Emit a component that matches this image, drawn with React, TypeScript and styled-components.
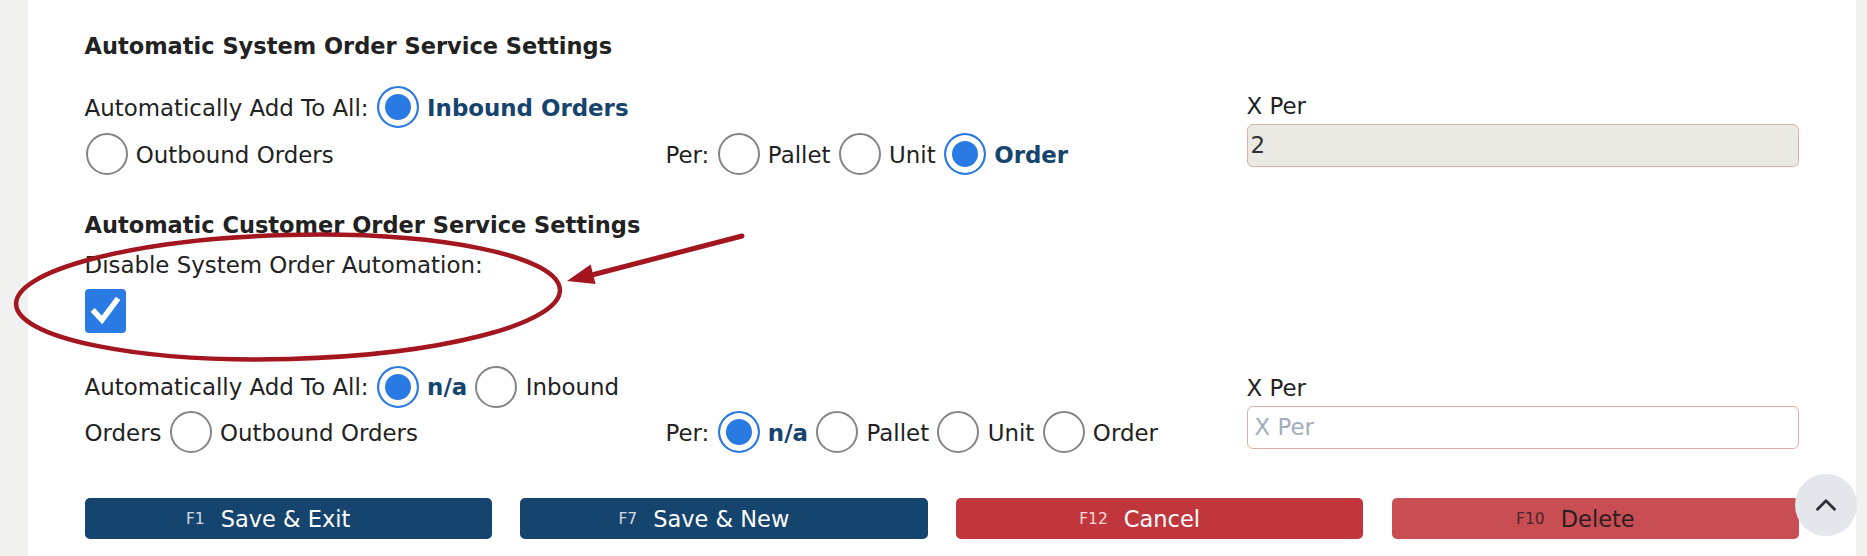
import styled, {createGlobalStyle} from "styled-components";
import {ChevronUp} from "lucide-react";

const GlobalStyle = createGlobalStyle`
    html, body {
        margin: 0;
        padding: 0;
        background: #f1f1ef;
        font-family: "DejaVu Sans", Verdana, sans-serif;
        font-size: 22.9px;
        color: #222;
    }
`

type Option = {
    label: string;
    checked?: boolean;
}

type RadioLineProps = {
    caption: string;
    options: Option[];
    offset?: boolean;
    line?: number;
}

const RadioLine = ({caption, options, offset, line = 45.2}: RadioLineProps) => {
    return (
        <Flow $offset={offset} $line={line}>
            {caption}{" "}
            {options.map((o, i) => (
                <span key={o.label}>
                    <Radio type="radio" checked={!!o.checked} readOnly/>{" "}
                    <OptionLabel $active={!!o.checked}>{o.label}</OptionLabel>
                    {i < options.length - 1 ? " " : ""}
                </span>
            ))}
        </Flow>
    )
}

type XPerProps = {
    value?: string;
    disabled?: boolean;
    top?: number;
}

const XPerField = ({value, disabled, top = 10}: XPerProps) => {
    return (
        <Field $top={top}>
            <FieldLabel>X Per</FieldLabel>
            <TextInput
                placeholder="X Per"
                value={value ?? ""}
                disabled={disabled}
                readOnly
            />
        </Field>
    )
}

const buttons = [
    {key: "F1", label: "Save & Exit", kind: "primary"},
    {key: "F7", label: "Save & New", kind: "primary"},
    {key: "F12", label: "Cancel", kind: "danger"},
    {key: "F10", label: "Delete", kind: "muted"},
] as const

export default function App() {
    return (
        <>
            <GlobalStyle/>
            <Page>
                <Panel>
                    <Heading>Automatic System Order Service Settings</Heading>
                    <ThreeCols $gapTop={24.7}>
                        <RadioLine
                            caption="Automatically Add To All:"
                            line={47.2}
                            options={[
                                {label: "Inbound Orders", checked: true},
                                {label: "Outbound Orders"},
                            ]}
                        />
                        <RadioLine
                            caption="Per:"
                            offset
                            line={47.2}
                            options={[
                                {label: "Pallet"},
                                {label: "Unit"},
                                {label: "Order", checked: true},
                            ]}
                        />
                        <XPerField value="2" disabled top={8.8}/>
                    </ThreeCols>

                    <Heading $spaced>Automatic Customer Order Service Settings</Heading>
                    <PlainLabel>Disable System Order Automation:</PlainLabel>
                    <CheckBox>
                        <svg width="41" height="44" viewBox="0 0 41 44">
                            <path d="M9.5 23 L17 31 L31.5 11.5" fill="none" stroke="#fff" strokeWidth="5.5"
                                  strokeLinecap="square" strokeLinejoin="miter"/>
                        </svg>
                    </CheckBox>

                    <ThreeCols $gapTop={32.8}>
                        <RadioLine
                            caption="Automatically Add To All:"
                            options={[
                                {label: "n/a", checked: true},
                                {label: "Inbound Orders"},
                                {label: "Outbound Orders"},
                            ]}
                        />
                        <RadioLine
                            caption="Per:"
                            offset
                            options={[
                                {label: "n/a", checked: true},
                                {label: "Pallet"},
                                {label: "Unit"},
                                {label: "Order"},
                            ]}
                        />
                        <XPerField/>
                    </ThreeCols>

                    <ButtonRow>
                        {buttons.map(b => (
                            <ActionButton key={b.key} $kind={b.kind}>
                                <FKey>{b.key}</FKey>{b.label}
                            </ActionButton>
                        ))}
                    </ButtonRow>
                </Panel>
            </Page>

            {/* annotation drawn over the screenshot */}
            <Annotation width="1867" height="556" viewBox="0 0 1867 556">
                <ellipse cx="288" cy="297" rx="272" ry="62" fill="none" stroke="#a3161f" strokeWidth="4.5"
                         transform="rotate(-1.5 288 297)"/>
                <line x1="742" y1="236" x2="588" y2="276" stroke="#a3161f" strokeWidth="5" strokeLinecap="round"/>
                <polygon points="567,281 590.6,264.6 595.6,284" fill="#a3161f"/>
            </Annotation>

            <ScrollTop>
                <ChevronUp size={34} strokeWidth={2} color="#2d3039"/>
            </ScrollTop>
        </>
    )
}

const Page = styled.div`
    display: flex;
    min-height: 556px;
    padding: 0 11px 0 28px;
`

const Panel = styled.div`
    flex: 1;
    background: #fff;
    padding: 33px 57px 0 56.5px;
`

const Heading = styled.h3<{ $spaced?: boolean }>`
    margin: ${p => p.$spaced ? "32.6px" : "0"} 0 0;
    font-size: 22.5px;
    line-height: 27px;
    font-weight: bold;
    color: #222;
`

const ThreeCols = styled.div<{ $gapTop: number }>`
    display: grid;
    grid-template-columns: repeat(3, 1fr);
    column-gap: 28.5px;
    margin-top: ${p => p.$gapTop}px;
`

const Flow = styled.div<{ $offset?: boolean; $line: number }>`
    line-height: ${p => p.$line}px;
    padding-top: ${p => p.$offset ? p.$line : 0}px;
    color: #222;
`

const Radio = styled.input`
    appearance: none;
    box-sizing: border-box;
    width: 42px;
    height: 42px;
    margin: 0 1px;
    border: 2px solid #858585;
    border-radius: 50%;
    background: #fff;
    vertical-align: middle;
    position: relative;
    top: -2px;

    &:checked {
        border: 2.5px solid #2a7ae4;
        background: #2a7ae4;
        box-shadow: inset 0 0 0 6px #fff;
    }
`

const OptionLabel = styled.span<{ $active: boolean }>`
    font-weight: ${p => p.$active ? "bold" : "normal"};
    color: ${p => p.$active ? "#15446e" : "#222"};
`

const Field = styled.div<{ $top: number }>`
    padding-top: ${p => p.$top}px;
    display: flex;
    flex-direction: column;
`

const FieldLabel = styled.label`
    line-height: 27px;
    margin-bottom: 3.5px;
`

const TextInput = styled.input`
    box-sizing: border-box;
    height: 43px;
    width: 100%;
    border: 1px solid #dcb0a8;
    border-radius: 6px;
    padding: 0 6px 0 3px;
    font-family: inherit;
    font-size: 22.9px;
    color: #333;
    background: #fff;

    &:disabled {
        background: #ebe9e3;
        color: #333;
    }

    &::placeholder {
        color: #a3adba;
        padding-left: 4px;
    }
`

const PlainLabel = styled.div`
    margin-top: 13.5px;
    line-height: 27px;
`

const CheckBox = styled.div`
    margin-top: 9.5px;
    width: 41px;
    height: 44px;
    border-radius: 4px;
    background: #2a7ae4;
    display: flex;
    align-items: center;
    justify-content: center;
`

const ButtonRow = styled.div`
    display: grid;
    grid-template-columns: repeat(4, 1fr);
    column-gap: 28.5px;
    margin-top: 42.1px;
`

const ActionButton = styled.button<{ $kind: "primary" | "danger" | "muted" }>`
    height: 41.5px;
    border: none;
    border-radius: 5px;
    padding: 0 40px 0 0;
    font-family: inherit;
    font-size: 22.5px;
    cursor: pointer;
    background: ${p => p.$kind === "primary" ? "#15446e" : p.$kind === "danger" ? "#c1353c" : "#c84e54"};
    color: ${p => p.$kind === "muted" ? "#2b1e20" : "#fff"};
    display: flex;
    align-items: center;
    justify-content: center;
`

const FKey = styled.span`
    font-size: 15.5px;
    margin-right: 16px;
    opacity: 0.8;
`

const Annotation = styled.svg`
    position: absolute;
    left: 0;
    top: 0;
    pointer-events: none;
`

const ScrollTop = styled.button`
    position: fixed;
    right: 10px;
    bottom: 20px;
    width: 62px;
    height: 62px;
    border-radius: 50%;
    border: none;
    background: #e3e6ea;
    display: flex;
    align-items: center;
    justify-content: center;
    padding: 0;
    cursor: pointer;
`
